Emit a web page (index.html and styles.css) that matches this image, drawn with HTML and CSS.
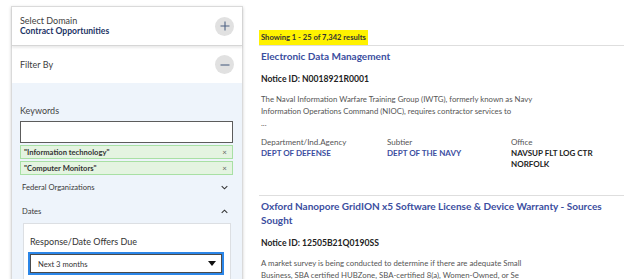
FILE: index.html
```html
<!DOCTYPE html>
<html lang="en">
<head>
<meta charset="utf-8">
<title>Contract Opportunities</title>
<link rel="stylesheet" href="styles.css">
</head>
<body>
<div class="page">
  <aside class="sidebar">
    <div class="sec sec-domain">
      <div class="sec-text">
        <div class="sec-label">Select Domain</div>
        <div class="sec-value">Contract Opportunities</div>
      </div>
      <span class="circ"><svg viewBox="0 0 10 10" width="10" height="10"><path d="M5 0.5V9.5M0.5 5H9.5" stroke="#4f6384" stroke-width="1.1" fill="none"/></svg></span>
    </div>
    <div class="sec sec-filter">
      <div class="sec-label">Filter By</div>
      <span class="circ"><svg viewBox="0 0 10 10" width="10" height="10"><path d="M0.5 5H9.5" stroke="#4f6384" stroke-width="1.1" fill="none"/></svg></span>
    </div>
    <div class="filters">
      <div class="kw-label">Keywords</div>
      <div class="kw-input"></div>
      <div class="chip"><span>"Information technology"</span><span class="x">×</span></div>
      <div class="chip"><span>"Computer Monitors"</span><span class="x">×</span></div>
      <div class="acc"><span>Federal Organizations</span><svg viewBox="0 0 8 5" width="7" height="5"><path d="M0.8 0.8L4 4L7.2 0.8" stroke="#333" stroke-width="1.2" fill="none"/></svg></div>
      <div class="acc"><span>Dates</span><svg viewBox="0 0 8 5" width="7" height="5"><path d="M0.8 4.2L4 1L7.2 4.2" stroke="#333" stroke-width="1.2" fill="none"/></svg></div>
      <div class="datebox">
        <div class="date-label">Response/Date Offers Due</div>
        <div class="select"><span>Next 3 months</span><svg viewBox="0 0 8 5" width="8" height="5"><path d="M0 0H8L4 5Z" fill="#111"/></svg></div>
      </div>
    </div>
  </aside>
  <main class="results">
    <div class="count"><span class="hl">Showing 1 - 25 of 7,342 results</span></div>
    <article class="item">
      <h2 class="title">Electronic Data Management</h2>
      <div class="notice">Notice ID: N0018921R0001</div>
      <p class="desc">The Naval Information Warfare Training Group (IWTG), formerly known as Navy Information Operations Command (NIOC), requires contractor services to<br>...</p>
      <div class="meta">
        <div><div class="m-label">Department/Ind.Agency</div><div class="m-link">DEPT OF DEFENSE</div></div>
        <div><div class="m-label">Subtier</div><div class="m-link">DEPT OF THE NAVY</div></div>
        <div><div class="m-label">Office</div><div class="m-val">NAVSUP FLT LOG CTR NORFOLK</div></div>
      </div>
    </article>
    <article class="item">
      <h2 class="title">Oxford Nanopore GridION x5 Software License &amp; Device Warranty - Sources Sought</h2>
      <div class="notice">Notice ID: 12505B21Q0190SS</div>
      <p class="desc">A market survey is being conducted to determine if there are adequate Small Business, SBA certified HUBZone, SBA-certified 8(a), Women-Owned, or Se</p>
    </article>
  </main>
</div>
</body>
</html>
```

FILE: styles.css
```css
* { box-sizing: border-box; }
html, body { margin: 0; padding: 0; background: #fff; }
body {
  font-family: "Lato", "Noto Sans", sans-serif;
  color: #333;
  width: 624px;
  height: 279px;
  overflow: hidden;
}
.page {
  display: flex;
  align-items: flex-start;
}
.sidebar {
  margin: 6px 0 0 11px;
  width: 232px;
  border: 1px solid #dadada;
  box-shadow: 0 1px 3px rgba(0,0,0,0.18);
  background: #fff;
  flex: none;
}
.sec {
  display: flex;
  align-items: center;
  justify-content: space-between;
  padding: 0 8px 0 8px;
}
.sec-domain {
  height: 39px;
  border-bottom: 1px solid #d6d6d6;
  box-shadow: 0 2px 2px rgba(0,0,0,0.08);
  position: relative;
}
.sec-filter { height: 37px; }
.sec-label { font-size: 9px; line-height: 11px; color: #3d3d3d; }
.sec-value { font-size: 8.6px; line-height: 11px; font-weight: 700; color: #1c3465; }
.circ {
  width: 19px;
  height: 19px;
  border-radius: 50%;
  background: #e1e1e1;
  display: flex;
  align-items: center;
  justify-content: center;
}
.filters {
  background: #eef4fb;
  padding: 22px 9px 0 8px;
  height: 200px;
}
.kw-label { font-size: 9px; line-height: 11px; color: #444; }
.kw-input {
  margin-top: 5px;
  height: 22px;
  border: 1px solid #5c5c5c;
  background: #fff;
}
.chip {
  margin-top: 2px;
  height: 14px;
  border: 1px solid #a8e0a4;
  background: #e4f4e1;
  display: flex;
  align-items: center;
  justify-content: space-between;
  padding: 0 5px 0 3px;
  font-size: 7.6px;
  font-weight: 700;
  color: #333;
}
.chip .x { font-weight: 400; color: #666; font-size: 8px; }
.acc {
  height: 24px;
  display: flex;
  align-items: center;
  justify-content: space-between;
  padding: 0 5px 0 2px;
  font-size: 7.6px;
  color: #3a3a3a;
}
.datebox {
  margin: 0 2px 0 3px;
  background: #fff;
  border: 1px solid #dcdfe3;
  padding: 12px 6px 0 4px;
  height: 70px;
}
.date-label {
  font-size: 9px;
  line-height: 11px;
  color: #333;
  padding-left: 2px;
}
.select {
  margin-top: 5px;
  height: 23px;
  border: 2px solid #2b86e8;
  box-shadow: inset 0 0 0 1px #4a4a4a;
  display: flex;
  align-items: center;
  justify-content: space-between;
  padding: 0 6px 0 8px;
  font-size: 7.6px;
  color: #333;
}
.results {
  margin-left: 16px;
  flex: 1;
  padding-top: 30px;
}
.count {
  display: flex;
  align-items: flex-start;
  height: 16px;
  border-bottom: 1px solid #dedede;
}
.hl {
  display: block;
  background: #fff200;
  height: 15px;
  line-height: 15px;
  padding: 0 2px;
  font-size: 7.6px;
  font-weight: 700;
  color: #333;
}
.item {
  padding: 3px 0 0 2px;
}
.item + .item {
  border-top: 1px solid #dedede;
  margin-top: 25px;
}
.title {
  margin: 0;
  max-width: 362px;
  font-size: 10px;
  line-height: 14px;
  font-weight: 700;
  color: #3b4ea0;
}
.notice {
  margin-top: 10px;
  font-size: 8.6px;
  line-height: 12px;
  font-weight: 700;
  color: #222;
}
.desc {
  margin: 8px 0 0 0;
  max-width: 290px;
  font-size: 7.8px;
  line-height: 12px;
  color: #555;
}
.meta {
  margin-top: 8px;
  display: grid;
  grid-template-columns: 126px 124px 100px;
  font-size: 8px;
  line-height: 11px;
}
.m-label { color: #555; }
.m-link { color: #3b4ea0; font-weight: 700; }
.m-val { color: #222; font-weight: 700; max-width: 92px; }
```
